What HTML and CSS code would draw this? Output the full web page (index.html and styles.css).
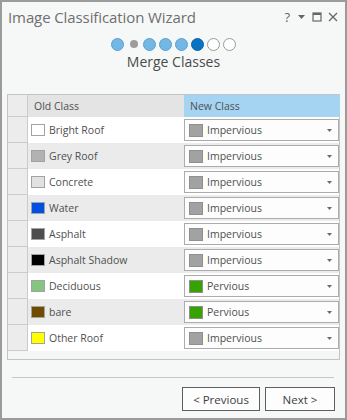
FILE: index.html
```html
<!DOCTYPE html>
<html>
<head>
<meta charset="utf-8">
<link rel="stylesheet" href="styles.css">
</head>
<body>
<div class="window">
  <div class="titlebar">
    <div class="title">Image Classification Wizard</div>
    <div class="ctrls">
      <span class="help">?</span>
      <svg class="ic" width="9" height="9" viewBox="0 0 9 9"><path d="M1 3h7l-3.5 4z" fill="#666"/></svg>
      <svg class="ic" width="10" height="10" viewBox="0 0 10 10"><rect x="1" y="1" width="8" height="8" fill="none" stroke="#666" stroke-width="1.2"/><rect x="1" y="1" width="8" height="2" fill="#666"/></svg>
      <svg class="ic" width="10" height="10" viewBox="0 0 10 10"><path d="M1 1l8 8M9 1l-8 8" stroke="#666" stroke-width="1.3"/></svg>
    </div>
  </div>
  <div class="steps">
    <span class="slot"><i class="dot done"></i></span>
    <span class="slot"><i class="dot skip"></i></span>
    <span class="slot"><i class="dot done"></i></span>
    <span class="slot"><i class="dot done"></i></span>
    <span class="slot"><i class="dot done"></i></span>
    <span class="slot"><i class="dot cur"></i></span>
    <span class="slot"><i class="dot todo"></i></span>
    <span class="slot"><i class="dot todo"></i></span>
  </div>
  <div class="step-name">Merge Classes</div>

  <div class="grid">
    <div class="row head">
      <div class="rh"></div>
      <div class="c-old">Old Class</div>
      <div class="c-new">New Class</div>
    </div>
    <div class="rows" id="rows"></div>
  </div>

  <div class="sep"></div>
  <div class="buttons">
    <button class="btn prev">&lt; Previous</button>
    <button class="btn next">Next &gt;</button>
  </div>
</div>
<script src="app.js"></script>
</body>
</html>
```
FILE: app.js
```js
var data = [
  ["Bright Roof", "#ffffff", "Impervious"],
  ["Grey Roof", "#b2b2b2", "Impervious"],
  ["Concrete", "#e1e1e1", "Impervious"],
  ["Water", "#0050e6", "Impervious"],
  ["Asphalt", "#4e4e4e", "Impervious"],
  ["Asphalt Shadow", "#000000", "Impervious"],
  ["Deciduous", "#85c57f", "Pervious"],
  ["bare", "#704b00", "Pervious"],
  ["Other Roof", "#ffff00", "Impervious"]
];
var html = "";
data.forEach(function (d, i) {
  var nc = d[2] === "Pervious" ? "sw-perv" : "sw-imp";
  html += '<div class="row' + (i % 2 ? ' alt' : '') + '">' +
    '<div class="rh"></div>' +
    '<div class="c-old"><span class="sw" style="background:' + d[1] + '"></span><span>' + d[0] + '</span></div>' +
    '<div class="c-new"><div class="combo"><span class="sw2 ' + nc + '"></span><span class="val">' + d[2] + '</span>' +
    '<svg class="arr" width="5" height="3" viewBox="0 0 5 3"><path d="M0 0h5l-2.5 3z" fill="#6a6a6a"/></svg></div></div>' +
    '</div>';
});
document.getElementById("rows").innerHTML = html;
```
FILE: styles.css
```css
* { box-sizing: border-box; }
html, body { margin: 0; padding: 0; }
body { width: 347px; height: 420px; overflow: hidden; font-family: "Open Sans", "Noto Sans", sans-serif; }

.window {
  width: 347px;
  height: 420px;
  border: 2px solid #9b9b9b;
  background: #f6f8f8;
  display: flex;
  flex-direction: column;
}

.titlebar {
  height: 29px;
  display: flex;
  align-items: center;
  padding: 0 7px 0 6px;
}
.title {
  flex: 1;
  font-size: 15px;
  color: #6f6f6f;
  letter-spacing: -0.1px;
  padding-top: 1px;
}
.ctrls { display: flex; align-items: center; gap: 6px; }
.help { font-size: 13px; color: #666; margin-right: 1px; }
.ic { display: block; }

.steps {
  display: flex;
  justify-content: center;
  height: 14px;
  margin-top: 6px;
}
.slot { width: 16px; display: flex; align-items: center; justify-content: center; }
.dot { display: block; width: 13px; height: 13px; border-radius: 50%; }
.dot.done { background: #73b8e5; border: 1px solid #5d9fcf; }
.dot.skip { width: 8px; height: 8px; background: #9c9c9c; }
.dot.cur { background: #0b72c1; border: 1px solid #0a64aa; }
.dot.todo { background: #fff; border: 1px solid #9a9a9a; }

.step-name {
  text-align: center;
  font-size: 14px;
  color: #4b4b4b;
  margin-top: 1px;
  height: 24px;
}

.grid {
  margin: 18px 5px 0 5px;
  height: 266px;
  border: 1px solid #c4c4c4;
  background: #f4f6f6;
}
.row {
  display: grid;
  grid-template-columns: 20px 156px 156px;
  height: 26px;
  background: #fff;
}
.row.alt { background: #ebebeb; }
.row.head { height: 22px; background: #e6e6e6; }
.rh {
  background: #ececec;
  border-right: 1px solid #cbcbcb;
  border-bottom: 1px solid #cbcbcb;
}
.head .rh { border-bottom: 1px solid #cbcbcb; }
.c-old, .c-new {
  font-size: 10.5px;
  color: #505050;
  display: flex;
  align-items: center;
}
.head .c-old { padding-left: 6px; background: #e4e4e4; }
.head .c-new { padding-left: 6px; background: #a5d4f2; }
.c-old { padding-left: 3px; }
.sw {
  width: 14px;
  height: 12px;
  border: 1px solid #a2a2a2;
  margin-right: 4px;
  flex: none;
}
.combo {
  width: 155px;
  height: 22px;
  border: 1px solid #acacac;
  background: #fdfdfd;
  display: flex;
  align-items: center;
  padding-left: 4px;
  padding-right: 6px;
}
.sw2 {
  width: 14px;
  height: 13px;
  border: 1px solid #8f8f8f;
  margin-right: 4px;
  flex: none;
}
.sw-imp { background: #a2a2a2; }
.sw-perv { background: #37a300; }
.val { flex: 1; }
.arr { display: block; }

.sep {
  margin: 17px 11px 0 10px;
  border-top: 1px solid #c6c6c6;
}
.buttons {
  display: flex;
  justify-content: flex-end;
  gap: 5px;
  margin-top: 9px;
  padding-right: 10px;
}
.btn {
  height: 24px;
  border: 1px solid #5f5f5f;
  background: #fdfdfd;
  font-family: "Open Sans", "Noto Sans", sans-serif;
  font-size: 11.5px;
  color: #404040;
  padding: 0;
}
.prev { width: 78px; }
.next { width: 70px; }
```
